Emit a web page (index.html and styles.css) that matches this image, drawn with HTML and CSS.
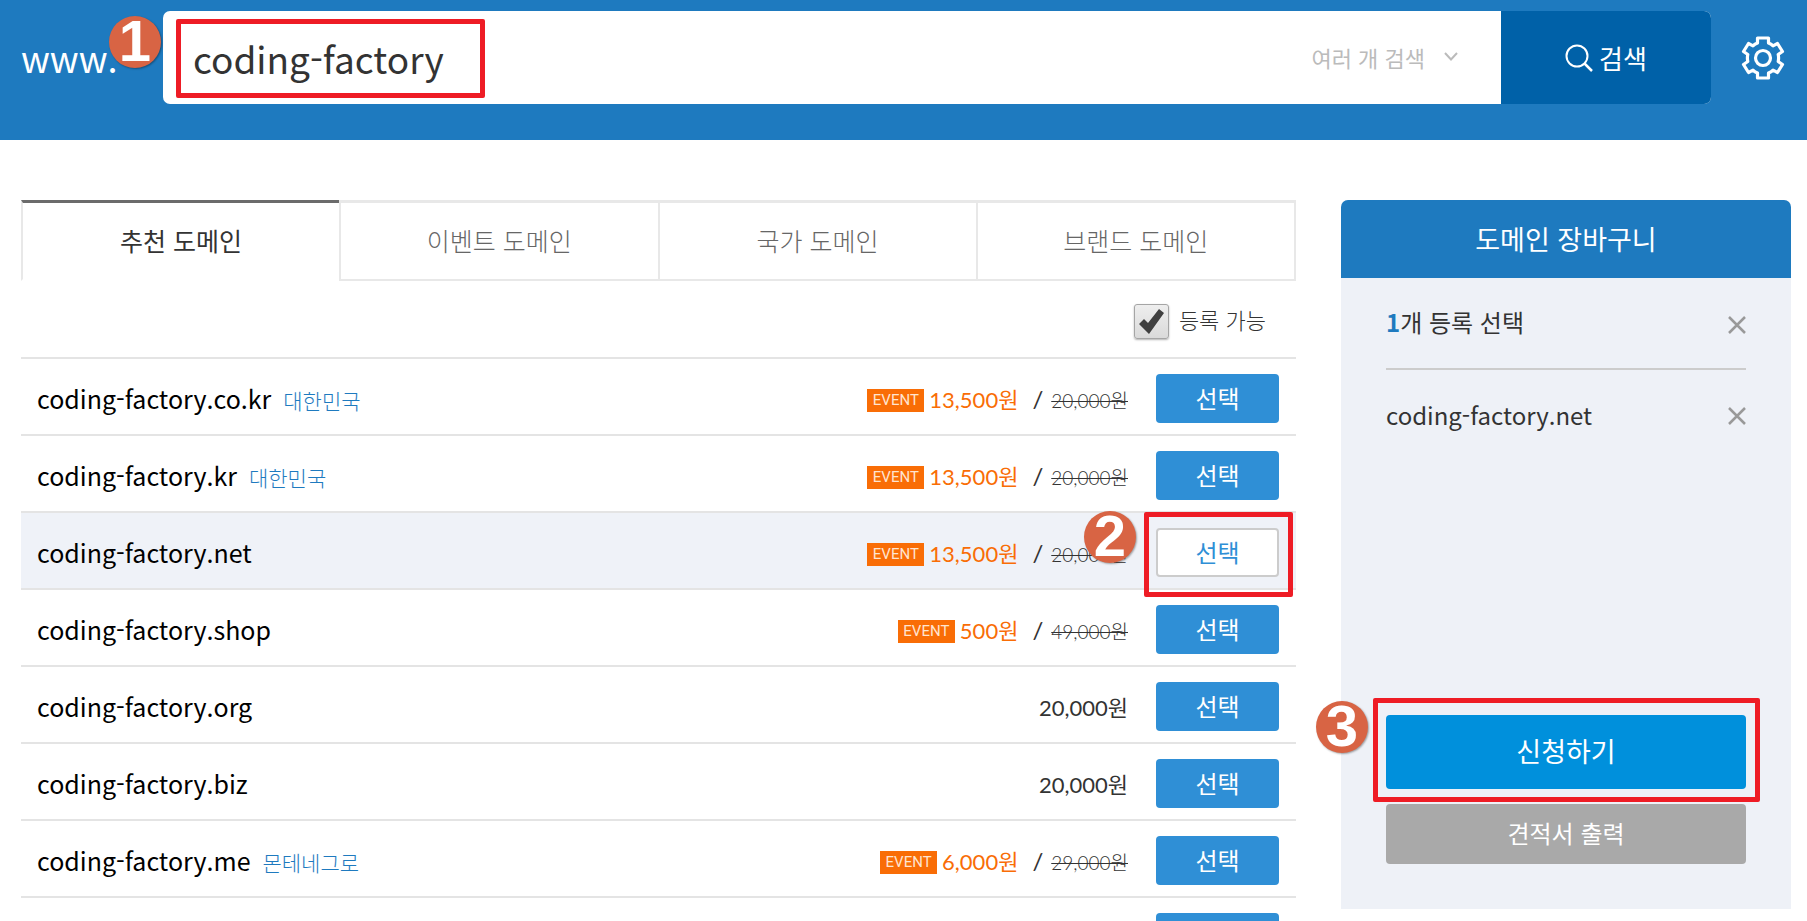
FILE: index.html
```html
<!DOCTYPE html>
<html lang="ko">
<head>
    <meta charset="UTF-8">
    <meta name="viewport" content="width=device-width, initial-scale=1.0">
    <title>도메인 검색</title>
    <link rel="stylesheet" href="styles.css">
</head>
<body>

<header class="search-bar">
    <label class="www" for="keyword">www.</label>
    <form class="search-form">
        <div class="keyword">
            <input type="text" id="keyword" value="coding-factory">
            <span class="mark mark-keyword"></span>
            <span class="num num-keyword">1</span>
        </div>
        <button type="button" class="multi">여러 개 검색
            <svg width="16" height="10" viewBox="0 0 16 10"><path d="M2 1l6 6.500l6-6.500" fill="none" stroke="#bbb" stroke-width="2"/></svg>
        </button>
        <button type="submit" class="submit">
            <svg width="28" height="28" viewBox="0 0 28 28"><g fill="none" stroke="#fff" stroke-width="2"><circle cx="12" cy="12" r="10.500"/><path d="M19.500 19.500l7.500 7.500" stroke-width="2.500"/></g></svg>
            검색
        </button>
    </form>
    <button type="button" class="setting" aria-label="설정">
        <svg width="44" height="46" viewBox="-22 -23 44 46"><g fill="none" stroke="#fff" stroke-width="3.200" stroke-linejoin="round"><path d="M-5.500-20H5.500V-15Q8-14 10-12.200L14.500-14.500L19.500-6.500L15.200-3.500Q16 0 15.200 3.500L19.500 6.500L14.500 14.500L10 12.200Q8 14 5.500 15V20H-5.500V15Q-8 14-10 12.200L-14.500 14.500L-19.500 6.500L-15.200 3.500Q-16 0-15.200-3.500L-19.500-6.500L-14.500-14.500L-10-12.200Q-8-14-5.500-15Z"/><circle r="7.500"/></g></svg>
    </button>
</header>

<main class="content">
    <section class="result">
        <nav class="tabs">
            <a href="#" class="on">추천 도메인</a>
            <a href="#">이벤트 도메인</a>
            <a href="#">국가 도메인</a>
            <a href="#">브랜드 도메인</a>
        </nav>
        <div class="filter">
            <input type="checkbox" id="available" checked>
            <label for="available">등록 가능</label>
        </div>
        <table class="domains">
            <tr>
                <td class="name">coding-factory.co.kr <small>대한민국</small></td>
                <td class="price"><em>EVENT</em><strong>13,500원</strong><i>/</i><del>20,000원</del></td>
                <td class="pick"><button type="button">선택</button></td>
            </tr>
            <tr>
                <td class="name">coding-factory.kr <small>대한민국</small></td>
                <td class="price"><em>EVENT</em><strong>13,500원</strong><i>/</i><del>20,000원</del></td>
                <td class="pick"><button type="button">선택</button></td>
            </tr>
            <tr class="selected">
                <td class="name">coding-factory.net</td>
                <td class="price"><em>EVENT</em><strong>13,500원</strong><i>/</i><del>20,000원</del></td>
                <td class="pick">
                    <button type="button">선택</button>
                    <span class="mark mark-pick"></span>
                    <span class="num num-pick">2</span>
                </td>
            </tr>
            <tr>
                <td class="name">coding-factory.shop</td>
                <td class="price"><em>EVENT</em><strong>500원</strong><i>/</i><del>49,000원</del></td>
                <td class="pick"><button type="button">선택</button></td>
            </tr>
            <tr>
                <td class="name">coding-factory.org</td>
                <td class="price">20,000원</td>
                <td class="pick"><button type="button">선택</button></td>
            </tr>
            <tr>
                <td class="name">coding-factory.biz</td>
                <td class="price">20,000원</td>
                <td class="pick"><button type="button">선택</button></td>
            </tr>
            <tr>
                <td class="name">coding-factory.me <small>몬테네그로</small></td>
                <td class="price"><em>EVENT</em><strong>6,000원</strong><i>/</i><del>29,000원</del></td>
                <td class="pick"><button type="button">선택</button></td>
            </tr>
            <tr>
                <td class="name"></td>
                <td class="price"></td>
                <td class="pick"><button type="button" aria-label="선택"></button></td>
            </tr>
        </table>
    </section>

    <aside class="cart">
        <h2>도메인 장바구니</h2>
        <div class="cart-body">
            <div class="cart-row cart-count">
                <span><b>1</b>개 등록 선택</span>
                <button type="button" class="close" aria-label="전체 삭제">
                    <svg width="18" height="18" viewBox="0 0 18 18"><path d="M1 1l16 16M17 1L1 17" stroke="#999" stroke-width="2.500"/></svg>
                </button>
            </div>
            <div class="cart-row">
                <span>coding-factory.net</span>
                <button type="button" class="close" aria-label="삭제">
                    <svg width="18" height="18" viewBox="0 0 18 18"><path d="M1 1l16 16M17 1L1 17" stroke="#999" stroke-width="2.500"/></svg>
                </button>
            </div>
            <div class="apply-wrap">
                <button type="button" class="apply">신청하기</button>
                <span class="mark mark-apply"></span>
                <span class="num num-apply">3</span>
            </div>
            <button type="button" class="print">견적서 출력</button>
        </div>
    </aside>
</main>

</body>
</html>
```

FILE: styles.css
```css
* {
    box-sizing: border-box;
}
body {
    margin: 0;
    height: 100vh;
    overflow: hidden;
    font-family: "Noto Sans CJK KR", sans-serif;
    font-size: 24px;
    color: #333;
    background: #fff;
}
button, input {
    font-family: inherit;
    font-size: inherit;
    border: 0;
    padding: 0;
}
button {
    cursor: pointer;
}

/* search bar */
.search-bar {
    display: flex;
    align-items: flex-start;
    height: 140px;
    padding: 11px 22px 0 21px;
    background: #1e7abf;
}
.www {
    width: 142px;
    line-height: 93px;
    font-size: 36px;
    color: #fff;
}
.search-form {
    display: flex;
    flex: 1;
    height: 93px;
    background: #fff;
    border-radius: 7px;
}
.keyword {
    position: relative;
    flex: 1;
}
.keyword input {
    width: 100%;
    height: 93px;
    padding-left: 30px;
    font-size: 37px;
    color: #333;
    background: none;
    outline: 0;
}
.multi {
    display: flex;
    align-items: center;
    gap: 18px;
    margin-right: 42px;
    padding-bottom: 2px;
    font-size: 22px;
    color: #bbb;
    background: none;
}
.submit {
    display: flex;
    align-items: center;
    justify-content: center;
    gap: 6px;
    width: 210px;
    font-size: 26px;
    color: #fff;
    background: #0061a8;
    border-radius: 0 7px 7px 0;
}
.setting {
    height: 93px;
    margin-left: 30px;
    background: none;
}
.setting svg {
    display: block;
}

/* layout */
.content {
    display: flex;
    align-items: flex-start;
    gap: 45px;
    padding: 60px 16px 0 21px;
}
.result {
    flex: 1;
}

/* tabs */
.tabs {
    display: grid;
    grid-template-columns: repeat(4, 1fr);
    border-right: 2px solid #e8e8e8;
}
.tabs a {
    height: 81px;
    border-top: 3px solid #e8e8e8;
    border-bottom: 2px solid #e8e8e8;
    border-left: 2px solid #e8e8e8;
    line-height: 75px;
    text-align: center;
    font-size: 25px;
    font-weight: 300;
    color: #666;
    text-decoration: none;
}
.tabs .on {
    border-top-color: #6b6b6b;
    border-bottom-color: transparent;
    font-weight: 400;
    color: #333;
}

/* filter */
.filter {
    display: flex;
    align-items: center;
    justify-content: flex-end;
    gap: 10px;
    height: 78px;
    padding: 4px 30px 0 0;
    border-bottom: 2px solid #e4e4e4;
    font-size: 22px;
    font-weight: 300;
}
.filter label {
    padding-bottom: 4px;
}
.filter input {
    appearance: none;
    width: 35px;
    height: 35px;
    margin: 0;
    border: 1px solid #a5a5a5;
    border-radius: 3px;
    background: url("data:image/svg+xml,%3Csvg xmlns='http://www.w3.org/2000/svg' viewBox='0 0 33 33'%3E%3Cpath d='M4 19l5-5 4 4L24 4l5 4-15 21z' fill='%23404040'/%3E%3C/svg%3E"), linear-gradient(#eee, #dadada);
    box-shadow: 0 1px 2px rgba(0, 0, 0, .3);
}

/* domain list */
.domains {
    width: 100%;
    border-spacing: 0;
}
.domains td {
    height: 77px;
    padding: 2px 0 0;
    border-bottom: 2px solid #e4e4e4;
}
.domains .selected {
    background: #eff2f8;
}
.domains .name {
    padding-left: 16px;
    font-size: 25px;
    color: #000;
}
.name small {
    margin-left: 5px;
    font-size: 21px;
    font-weight: 300;
    color: #1e7abf;
}
.price {
    text-align: right;
    font-family: Lato, "Noto Sans CJK KR", sans-serif;
    font-size: 22px;
}
.price em {
    display: inline-block;
    width: 57px;
    margin-right: 5px;
    line-height: 23px;
    vertical-align: 3px;
    text-align: center;
    font-family: Roboto, sans-serif;
    font-size: 15px;
    font-style: normal;
    color: #ffe4d0;
    background: #f96d06;
}
.price strong {
    font-weight: 400;
    color: #f96d06;
}
.price i {
    margin: 0 8px 0 14px;
    font-size: 24px;
    font-style: normal;
}
.price del {
    font-size: 19px;
    font-weight: 300;
}
.domains .pick {
    position: relative;
    width: 168px;
    padding-top: 4px;
}
.pick button {
    display: block;
    width: 123px;
    height: 49px;
    margin-left: 28px;
    padding-bottom: 3px;
    color: #fff;
    background: #2f8fd6;
    border-radius: 4px;
}
.selected .pick button {
    border: 2px solid #ccc;
    color: #2f8fd6;
    background: #fff;
}

/* cart */
.cart {
    width: 450px;
    background: #eef1f7;
    border-radius: 7px 7px 0 0;
}
.cart h2 {
    margin: 0;
    line-height: 78px;
    text-align: center;
    font-size: 27px;
    font-weight: 400;
    color: #fff;
    background: #1e7abf;
    border-radius: 7px 7px 0 0;
}
.cart-body {
    padding: 0 45px 45px;
}
.cart-row {
    display: flex;
    align-items: center;
    justify-content: space-between;
    height: 92px;
}
.cart-row span {
    padding-bottom: 3px;
}
.cart-count {
    border-bottom: 2px solid #ccc;
}
.cart-count .close {
    padding-top: 4px;
}
.cart-row b {
    color: #1e7abf;
}
.close {
    background: none;
}
.close svg {
    display: block;
}
.apply-wrap {
    position: relative;
    margin: 253px 0 15px;
}
.apply, .print {
    display: block;
    width: 100%;
    padding-bottom: 3px;
    color: #fff;
    border-radius: 4px;
}
.apply {
    height: 74px;
    font-size: 27px;
    background: #0090dc;
}
.print {
    height: 60px;
    background: #a9a9a9;
}

/* step marks */
.mark {
    position: absolute;
    border: 5px solid #ee1c25;
    border-radius: 2px;
    pointer-events: none;
}
.num {
    position: absolute;
    width: 52px;
    height: 52px;
    line-height: 50px;
    border-radius: 50%;
    text-align: center;
    font-family: "Liberation Sans", sans-serif;
    font-size: 58px;
    font-weight: 700;
    color: #fff;
    background: #d86444;
    box-shadow: 1px 1px 2px rgba(0, 0, 0, .35);
}
.mark-keyword {
    top: 8px;
    left: 13px;
    width: 309px;
    height: 79px;
}
.num-keyword {
    top: 5px;
    left: -54px;
}
.mark-pick {
    top: -1px;
    right: 3px;
    width: 149px;
    height: 85px;
}
.num-pick {
    top: -2px;
    left: -44px;
}
.mark-apply {
    top: -17px;
    left: -13px;
    right: -14px;
    height: 104px;
}
.num-apply {
    top: -14px;
    left: -70px;
}
```
